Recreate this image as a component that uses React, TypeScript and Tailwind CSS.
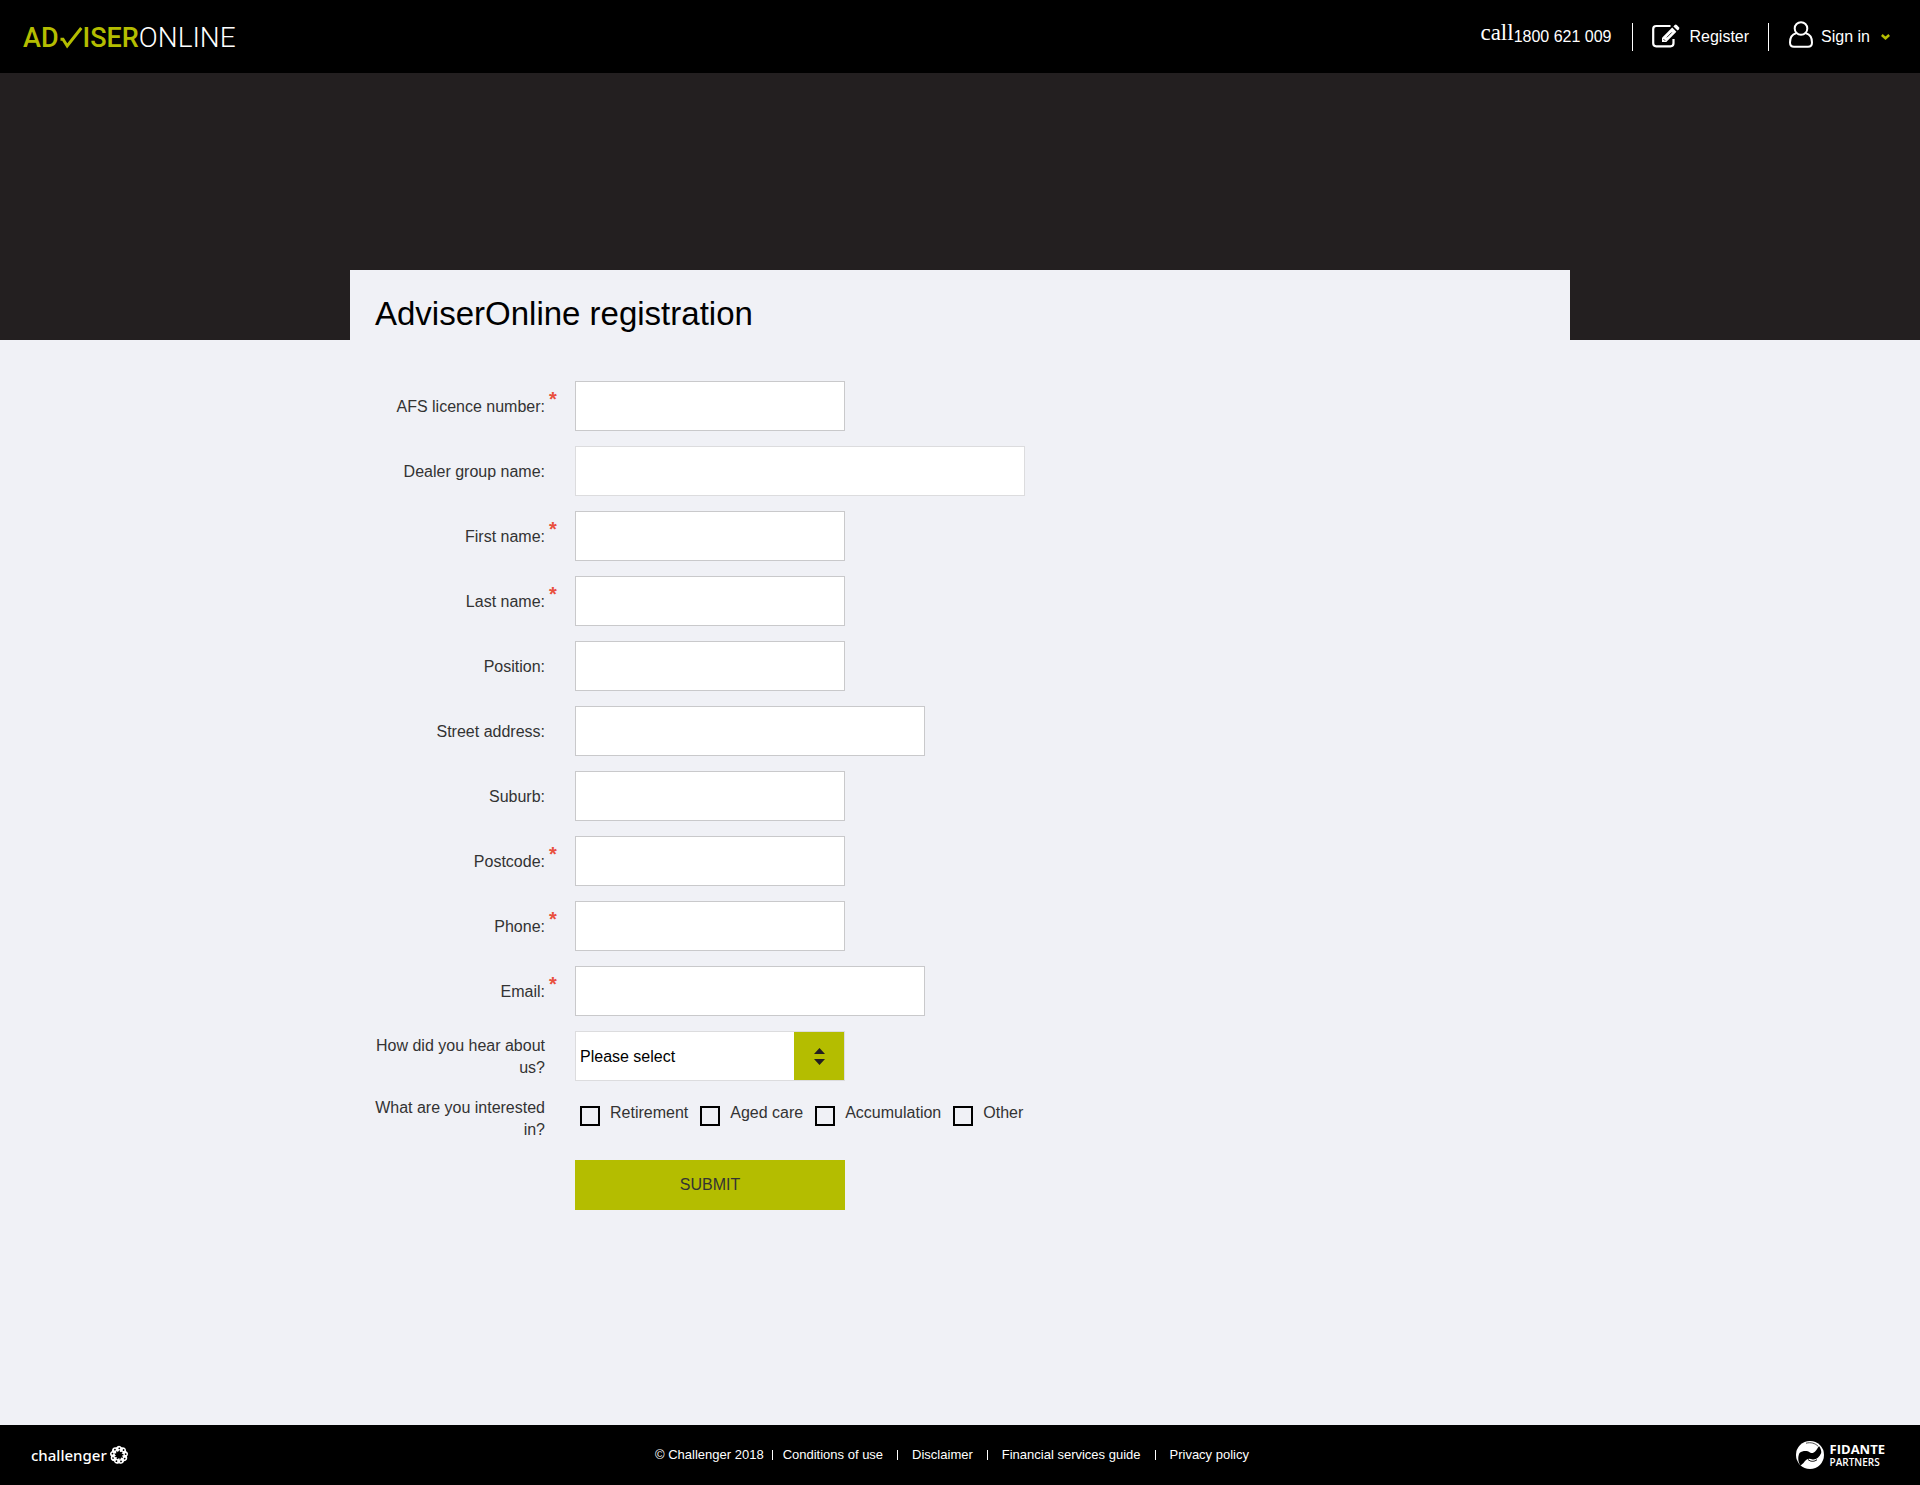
type Field = { id: string; label: string; required?: boolean; width: string; tone?: string };

const fields: Field[] = [
  { id: "licence", label: "AFS licence number:", required: true, width: "w-[270px]" },
  { id: "dealer", label: "Dealer group name:", width: "w-[450px]", tone: "border-[#dcdcde]" },
  { id: "first", label: "First name:", required: true, width: "w-[270px]" },
  { id: "last", label: "Last name:", required: true, width: "w-[270px]" },
  { id: "position", label: "Position:", width: "w-[270px]" },
  { id: "street", label: "Street address:", width: "w-[350px]" },
  { id: "suburb", label: "Suburb:", width: "w-[270px]" },
  { id: "postcode", label: "Postcode:", required: true, width: "w-[270px]" },
  { id: "phone", label: "Phone:", required: true, width: "w-[270px]" },
  { id: "email", label: "Email:", required: true, width: "w-[350px]" },
];

const interests = ["Retirement", "Aged care", "Accumulation", "Other"];
const links = ["Conditions of use", "Disclaimer", "Financial services guide", "Privacy policy"];
const petals = [0, 40, 80, 120, 160, 200, 240, 280, 320];

function Logo() {
  return (
    <a href="#" aria-label="AdviserOnline" className="flex items-center pt-0.5 font-['Roboto',sans-serif] text-[28px] leading-8">
      <span className="text-[27px] font-medium text-[#b4bd00]">AD</span>
      <svg viewBox="0 0 24 22" className="h-[22px] w-6" fill="none" stroke="#b4bd00" strokeWidth="3">
        <path d="M1.5 12.200H4L8.200 19 22.300 1" />
      </svg>
      <span className="text-[27px] font-medium text-[#b4bd00]">ISER</span>
      <span className="font-light text-white">ONLINE</span>
    </a>
  );
}

function RegisterIcon() {
  return (
    <svg viewBox="0 0 28 24" className="mb-0.5 h-6 w-7" fill="none">
      <path d="M18.500 2H4.200A3 3 0 0 0 1.200 5v14.300a3 3 0 0 0 3 3h14.300a3 3 0 0 0 3-3V15" stroke="currentColor" strokeWidth="2.200" />
      <path d="m20.200 3.600 4.200 4.200L14.300 18H10v-4.200Z" fill="currentColor" />
      <path d="m21.400 2.400 1.300-1.300a1.500 1.500 0 0 1 2.100 0l2.100 2.100a1.500 1.500 0 0 1 0 2.100l-1.300 1.300Z" fill="currentColor" />
      <path d="m14.800 13.400 5-5M11.400 15l1.800 1.800" stroke="#000" strokeWidth=".8" />
    </svg>
  );
}

function Header() {
  return (
    <header className="flex h-[73px] items-center justify-between bg-black pr-[30px] pl-[23px] text-white">
      <Logo />
      <nav className="flex items-center">
        <a href="#" className="flex items-center pr-5">
          <span className="pb-2 font-['Liberation_Serif',serif] text-[23px] leading-6">call</span>
          <span>1800 621 009</span>
        </a>
        <a href="#" className="flex h-7 items-center gap-2.5 border-l border-white px-[19px]">
          <RegisterIcon />
          <span>Register</span>
        </a>
        <button type="button" className="flex h-7 items-center border-l border-white pl-5">
          <svg viewBox="0 0 24 27" className="mr-2 mb-1 h-[27px] w-6" fill="none" stroke="currentColor" strokeWidth="2">
            <circle cx="12" cy="7.5" r="6.3" />
            <path d="M7 12.300C3 13.500 1 17 1 21.500c0 3 1.500 4.300 4 4.300h14c2.500 0 4-1.300 4-4.300 0-4.500-2-8-6-9.200" />
          </svg>
          <span>Sign in</span>
          <svg viewBox="0 0 9 6" className="ml-[11px] h-1.5 w-[9px]" fill="none" stroke="#b4bd00" strokeWidth="2.600">
            <path d="M.8 1 4.500 4.200 8.200 1" />
          </svg>
        </button>
      </nav>
    </header>
  );
}

function Footer() {
  return (
    <footer className="grid h-[60px] grid-cols-[1fr_auto_1fr] items-center bg-black pr-[35px] pl-[31px] text-[13px] text-white">
      <a href="#" className="flex items-center gap-0.5 font-['Noto_Sans',sans-serif] text-[15px] leading-5 font-medium">
        challenger
        <svg viewBox="0 0 20 20" className="h-5 w-5">
          {petals.map((a) => (
            <g key={a} transform={`rotate(${a} 10 10)`}>
              <path d="M6.900 2.700Q10-1 13.100 2.700L12 6.300 10.400 5.300 8.600 7.200Z" fill="#fff" />
              <circle cx="10.300" cy="3.300" r=".9" fill="#000" />
            </g>
          ))}
        </svg>
      </a>
      <div className="mr-3 flex items-center">
        <span>© Challenger 2018</span>
        {links.map((l, i) => (
          <span key={l} className="flex items-center">
            <span className={i === 0 ? "mr-2.5 ml-2 h-2.5 w-px bg-white" : "mx-3.5 h-2.5 w-px bg-white"} />
            <a href="#">{l}</a>
          </span>
        ))}
      </div>
      <a href="#" className="flex items-center gap-1.5 justify-self-end">
        <svg viewBox="0 0 28 28" className="h-7 w-7">
          <circle cx="14" cy="14" r="14" fill="#fff" />
          <path d="M3.500 12C7 9.500 11 9.500 14 11.500c3.500 2 5.500-1 9-6.500 2 3 2.500 5 2.200 7-2 4.500-5 7-8.700 6.500-4-1.500-6-.5-9 3.500l-3 2.500C2 21 1.500 16 3.500 12Z" fill="#000" />
          <path d="M12 18.500c3 2.500 6 2.300 9 .2" fill="none" stroke="#000" strokeWidth="1" />
          <path d="M10 2.200c5-1.200 9 0 12 3" fill="none" stroke="#000" strokeWidth=".7" />
        </svg>
        <span className="flex flex-col font-['Open_Sans',sans-serif]">
          <b className="text-[13px] leading-[14px]">FIDANTE</b>
          <b className="text-[10px] leading-3 font-semibold">PARTNERS</b>
        </span>
      </a>
    </footer>
  );
}

export default function App() {
  return (
    <div className="flex min-h-screen flex-col bg-[#f0f1f6] font-['Liberation_Sans',Arial,sans-serif] text-base leading-[22px] text-[#333]">
      <Header />
      <div className="flex h-[267px] items-end bg-[#231f20]">
        <div className="mx-auto h-[70px] w-full max-w-[1220px] bg-[#f0f1f6] px-[25px] pt-5">
          <h1 className="text-[33px] leading-12 text-black">AdviserOnline registration</h1>
        </div>
      </div>
      <main className="mx-auto w-full max-w-[1220px] grow px-[25px] pt-[41px]">
        <form className="flex flex-col gap-[15px]">
          {fields.map((f) => (
            <div key={f.id} className="flex items-center">
              <label htmlFor={f.id} className="w-[170px] pt-0.5 text-right">{f.label}</label>
              <span className="h-[50px] w-[30px] pt-1 pl-1 text-xl font-bold text-[#e9503e]">{f.required ? "*" : ""}</span>
              <input id={f.id} type="text" className={`h-[50px] border bg-white px-1 ${f.width} ${f.tone ?? "border-[#c9c9cb]"}`} />
            </div>
          ))}
          <div className="flex items-center">
            <label htmlFor="hear" className="mr-[30px] w-[170px] pt-0.5 text-right">How did you hear about us?</label>
            <div className="relative w-[270px]">
              <select id="hear" className="h-[50px] w-full appearance-none border border-[#dcdcde] bg-white px-1 pt-0.5 text-black">
                <option>Please select</option>
              </select>
              <span className="pointer-events-none absolute top-px right-px flex h-12 w-[50px] items-center justify-center bg-[#b4bd00]">
                <svg viewBox="0 0 11 17" className="h-[17px] w-[11px]" fill="#231f20">
                  <path d="M5.500 0 11 6H0ZM5.500 17 0 11h11Z" />
                </svg>
              </span>
            </div>
          </div>
          <fieldset className="flex items-start">
            <legend className="float-left mr-[30px] w-[170px] pt-px text-right">What are you interested in?</legend>
            <div className="flex gap-3 pt-1.5 pl-[5px]">
              {interests.map((t) => (
                <label key={t} className="flex gap-2.5">
                  <input type="checkbox" className="mt-1 h-5 w-5 appearance-none border-2 border-black checked:bg-[#b4bd00]" />
                  <span>{t}</span>
                </label>
              ))}
            </div>
          </fieldset>
          <button type="submit" className="mt-1 ml-[200px] h-[50px] w-[270px] bg-[#b4bd00]">SUBMIT</button>
        </form>
      </main>
      <Footer />
    </div>
  );
}
